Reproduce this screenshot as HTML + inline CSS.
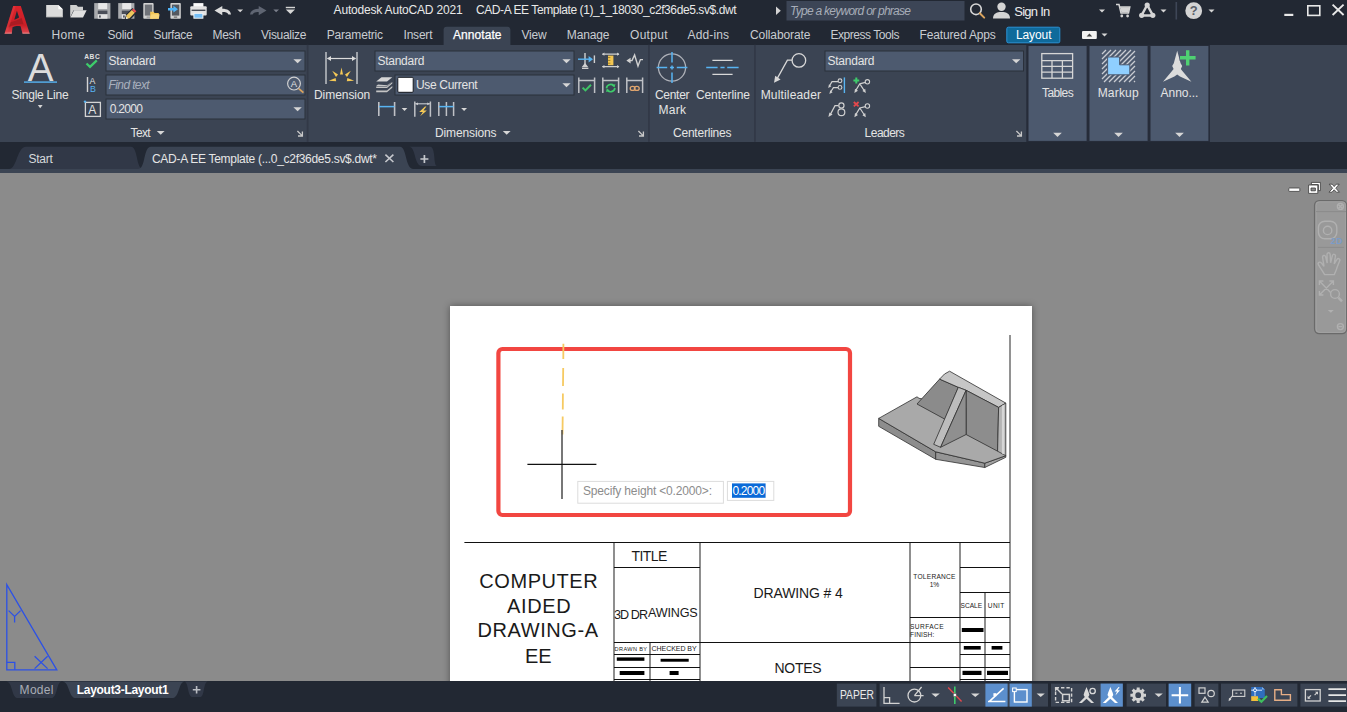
<!DOCTYPE html>
<html lang="en"><head><meta charset="utf-8"><title>Autodesk AutoCAD 2021 - CAD-A EE Template</title>
<style>
html,body{margin:0;padding:0;background:#8b8b8b;overflow:hidden}
body{width:1347px;height:712px;position:relative;font-family:"Liberation Sans", sans-serif}
#app{position:absolute;left:0;top:0;width:1347px;height:712px;overflow:hidden;background:#8b8b8b}
.bar{position:absolute;left:0;width:1347px}
#titlebar{top:0;height:45px;background:#222833}
#ribbon{top:45px;height:97px;background:#3b4453}
#filetabs{top:142px;height:31px;background:#222833}
#drawing{top:173px;height:509px;background:#8b8b8b;overflow:hidden}
#paper{position:absolute;left:450.4px;top:132.8px;width:581.3px;height:420px;background:#fff;box-shadow:0 0 7px 0 rgba(0,0,0,.4)}
#statusbar{top:681px;height:31px;background:#222833}
#gfx{position:absolute;left:0;top:0;width:1347px;height:712px}
#gfx text{font-family:"Liberation Sans", sans-serif;white-space:pre}
</style></head><body>
<div id="app">
<div class="bar" id="titlebar"></div>
<div class="bar" id="ribbon"></div>
<div class="bar" id="filetabs"></div>
<div class="bar" id="drawing"><div id="paper"></div></div>
<div class="bar" id="statusbar"></div>
<svg id="gfx" width="1347" height="712" viewBox="0 0 1347 712">
<defs><linearGradient id="lg" x1="0" y1="0" x2="0" y2="1"><stop offset="0" stop-color="#d9232b"/><stop offset=".7" stop-color="#c91f27"/><stop offset=".93" stop-color="#d94048"/><stop offset="1" stop-color="#f08a8a"/></linearGradient></defs><g><path d="M13.2 5.9H20.8L29.8 33.7H22.5L20.6 26.3C17.6 25.7 14.6 26.2 12.5 27.2L11.8 33.7H4.5Z" fill="url(#lg)"/><path d="M16.9 10.7L19.1 17.4C17.6 18.3 15.9 19.2 14.3 19.7Z" fill="#222833"/><path d="M10 22.6C14 21.4 18.4 19.6 21.6 18L23.6 24.4C19.4 23.6 12.6 24.8 8.2 27.4Z" fill="#ab1b22"/><path d="M13.2 5.9H15.6L7.2 33.7H4.5Z" fill="#ef4a4e" opacity=".35"/></g><path d="M46.2 5H58.4L62.8 9.2V17H46.2Z" fill="#dcdcdc"/><path d="M58.4 5V9.2H62.8Z" fill="#fff"/><path d="M46.2 16.4H62.8V17.4H46.2Z" fill="#b8b8b8"/><path d="M70.2 5H76.4L78 6.8H83V10.4H73.4L70.2 17.4Z" fill="#d0d0d0"/><path d="M74 10.2H86.6L83 17.6H70.4Z" fill="#e0e0e0"/><rect x="94.2" y="3.1" width="16.2" height="15.6" fill="#a9abae"/><rect x="98.2" y="3.1" width="9" height="5.9" fill="#e8e8e8"/><rect x="97.8" y="10.6" width="9.6" height="3.4" fill="#4a4e58"/><rect x="97.8" y="14.4" width="9.6" height="4.3" fill="#e2e2e2"/><rect x="99" y="15.4" width="1.8" height="2.2" fill="#5a5e68"/><rect x="118.2" y="3.1" width="16.2" height="15.6" fill="#a9abae"/><rect x="122.2" y="3.1" width="9" height="5.9" fill="#e8e8e8"/><rect x="121.8" y="10.6" width="9.6" height="3.4" fill="#4a4e58"/><rect x="121.8" y="14.4" width="9.6" height="4.3" fill="#e2e2e2"/><rect x="123" y="15.4" width="1.8" height="2.2" fill="#5a5e68"/><path d="M124.6 19.6L126.2 14.2L132.4 8L137 12.4L130.6 19.6Z" fill="#222833"/><path d="M126.6 15.2L131.8 10L134.8 12.8L129.6 18.2L125.8 19Z" fill="#ecc65c"/><path d="M131.8 10L133.4 8.4L136.4 11.2L134.8 12.8Z" fill="#ea4f52"/><path d="M125.8 19L126.4 16.6L128 18.4Z" fill="#e8e8e8"/><rect x="143.3" y="3.1" width="10.3" height="15.6" rx=".8" fill="#d2d2d2"/><rect x="144.8" y="4.6" width="7.4" height="11" fill="#707379"/><rect x="146.6" y="16.6" width="3.4" height="1" fill="#8a8a8a"/><path d="M150.2 11.8H153.6L154.6 13H158.8V18.7H150.2Z" fill="#f2c555"/><path d="M151.4 14.2H159.6L158.8 18.7H150.2Z" fill="#f7d57a"/><rect x="170.4" y="3.1" width="10.4" height="15.6" rx=".8" fill="#d2d2d2"/><rect x="171.9" y="4.6" width="7.4" height="11" fill="#54585f"/><rect x="173.8" y="16.6" width="3.4" height="1" fill="#555"/><path d="M168 7.9H173.4V5.8L178 9.2L173.4 12.6V10.5H168Z" fill="#4fb4f8"/><rect x="193.4" y="3.1" width="10" height="4" fill="#fafafa"/><rect x="190.3" y="6.3" width="16.4" height="9.3" rx="1" fill="#e2e2e2"/><rect x="191.6" y="9.6" width="13.8" height="1.4" fill="#4a4e58"/><rect x="193.9" y="13.3" width="9" height="4.9" fill="#76bff6" stroke="#f4f4f4" stroke-width="1"/><path d="M214.5 10.6L222.3 6V8.7C227.5 8.7 230.6 10.8 231 14.6H228.4C227.6 12.6 225.6 12 222.3 12V15.2Z" fill="#dcdcdc"/><path d="M237.3 9.5H243.1L240.2 12.2Z" fill="#d6d6d6"/><path d="M266.5 10.6L258.7 6V8.7C253.5 8.7 250.4 10.8 250 14.6H252.6C253.4 12.6 255.4 12 258.7 12V15.2Z" fill="#5f6572"/><path d="M273.3 9.5H279L276.15 12.2Z" fill="#7a7f8b"/><rect x="285.8" y="6.8" width="9.2" height="1.4" fill="#d4d4d4"/><path d="M285.8 9.6H295L290.4 14Z" fill="#d6d6d6"/><text x="333.6" y="14" font-size="12" fill="#e8e8e8" textLength="129" lengthAdjust="spacing" >Autodesk AutoCAD 2021</text><text x="476" y="14" font-size="12" fill="#e8e8e8" textLength="260.5" lengthAdjust="spacing" >CAD-A EE Template (1)_1_18030_c2f36de5.sv$.dwt</text><path d="M776 6.5L780.8 10.8L776 15Z" fill="#d4d4d4"/><rect x="786.5" y="1" width="178" height="19.5" fill="#3c4556"/><text x="790" y="15" font-size="12" fill="#a7adb8" textLength="121" lengthAdjust="spacing" font-style="italic" >Type a keyword or phrase</text><circle cx="976" cy="9.3" r="5.3" fill="none" stroke="#d8d8d8" stroke-width="1.6"/><path d="M979.8 13.2L984.2 17.6" stroke="#d9a35e" stroke-width="2" stroke-linecap="round"/><circle cx="1001.5" cy="6.8" r="4.2" fill="#d4d4d4"/><path d="M993 18.5C993 13.5 996.5 12 1001.5 12S1010 13.5 1010 18.5Z" fill="#d4d4d4"/><text x="1014.3" y="16" font-size="13" fill="#ececec" textLength="36" lengthAdjust="spacing" >Sign In</text><path d="M1099 9.5H1105L1102.0 12.5Z" fill="#d6d6d6"/><path d="M1116 4.5H1119L1121 13H1128.5L1129.8 7H1120" fill="none" stroke="#d4d4d4" stroke-width="1.5"/><path d="M1120.3 7.3H1129.6L1128.4 12.6H1121.4Z" fill="#d4d4d4"/><circle cx="1121.8" cy="16" r="1.4" fill="#d4d4d4"/><circle cx="1127.6" cy="16" r="1.4" fill="#d4d4d4"/><path d="M1147.2 5L1141.5 15.5H1153Z" fill="none" stroke="#d4d4d4" stroke-width="2.5" stroke-linejoin="round"/><circle cx="1147.2" cy="5" r="2.6" fill="#d4d4d4"/><circle cx="1141.7" cy="15.3" r="2.6" fill="#d4d4d4"/><circle cx="1152.8" cy="15.3" r="2.6" fill="#d4d4d4"/><path d="M1160.5 9.5H1166.5L1163.5 12.5Z" fill="#d6d6d6"/><rect x="1175.5" y="2" width="1.6" height="17.5" fill="#3e4657"/><circle cx="1193.7" cy="10.7" r="8.4" fill="#d4d4d4"/><text x="1193.7" y="15.4" font-size="13" fill="#5a5f69" font-weight="bold" text-anchor="middle" >?</text><path d="M1208.5 9.5H1214.5L1211.5 12.5Z" fill="#d6d6d6"/><rect x="1284.3" y="13.8" width="9" height="2.2" fill="#e8e8e8"/><rect x="1307.8" y="5.8" width="12" height="9.6" fill="none" stroke="#e8e8e8" stroke-width="1.6"/><path d="M1332.6 4.6L1343.6 15M1343.6 4.6L1332.6 15" stroke="#e8e8e8" stroke-width="1.9"/><path d="M443.6 45V29.7Q443.6 26.7 446.6 26.7H507.4Q510.4 26.7 510.4 29.7V45Z" fill="#3b4453"/><text x="51.6" y="39" font-size="12" fill="#c9ccd1" textLength="33" lengthAdjust="spacing" >Home</text><text x="107.5" y="39" font-size="12" fill="#c9ccd1" textLength="25.6" lengthAdjust="spacing" >Solid</text><text x="153.6" y="39" font-size="12" fill="#c9ccd1" textLength="39" lengthAdjust="spacing" >Surface</text><text x="212.5" y="39" font-size="12" fill="#c9ccd1" textLength="28.5" lengthAdjust="spacing" >Mesh</text><text x="261" y="39" font-size="12" fill="#c9ccd1" textLength="45.5" lengthAdjust="spacing" >Visualize</text><text x="326.7" y="39" font-size="12" fill="#c9ccd1" textLength="56.4" lengthAdjust="spacing" >Parametric</text><text x="403.5" y="39" font-size="12" fill="#c9ccd1" textLength="29" lengthAdjust="spacing" >Insert</text><text x="521.5" y="39" font-size="12" fill="#c9ccd1" textLength="25.2" lengthAdjust="spacing" >View</text><text x="566.8" y="39" font-size="12" fill="#c9ccd1" textLength="42.7" lengthAdjust="spacing" >Manage</text><text x="630" y="39" font-size="12" fill="#c9ccd1" textLength="37.5" lengthAdjust="spacing" >Output</text><text x="687.5" y="39" font-size="12" fill="#c9ccd1" textLength="41.5" lengthAdjust="spacing" >Add-ins</text><text x="750" y="39" font-size="12" fill="#c9ccd1" textLength="60.5" lengthAdjust="spacing" >Collaborate</text><text x="830.5" y="39" font-size="12" fill="#c9ccd1" textLength="69" lengthAdjust="spacing" >Express Tools</text><text x="919.6" y="39" font-size="12" fill="#c9ccd1" textLength="76.2" lengthAdjust="spacing" >Featured Apps</text><text x="453" y="39" font-size="12" fill="#ffffff" textLength="48.5" lengthAdjust="spacing" stroke="#ffffff" stroke-width=".25">Annotate</text><rect x="1006.8" y="27.2" width="53" height="15.6" rx="1.5" fill="#0f6a9b" stroke="#2b93d6" stroke-width="1"/><text x="1015.9" y="39" font-size="12" fill="#ffffff" textLength="35.6" lengthAdjust="spacing" >Layout</text><rect x="1082" y="31" width="14.8" height="8" rx="1" fill="#f2f2f2"/><path d="M1086.6 36.6L1089.4 33.4L1092.2 36.6Z" fill="#444"/><path d="M1101.5 33.5H1107.5L1104.5 36.5Z" fill="#d6d6d6"/><rect x="306.70000000000005" y="44.8" width="1.8" height="97" fill="#323947"/><rect x="648.0" y="44.8" width="1.8" height="97" fill="#323947"/><rect x="754.0" y="44.8" width="1.8" height="97" fill="#323947"/><rect x="1026.3" y="44.8" width="183.6" height="97.2" fill="#262c39"/><rect x="1028.5" y="46" width="58.09999999999991" height="94.9" fill="#4c596e"/><rect x="1089.5" y="46" width="58.09999999999991" height="94.9" fill="#4c596e"/><rect x="1150.5" y="46" width="57.90000000000009" height="94.9" fill="#4c596e"/><text x="40.5" y="80.6" font-size="38.6" fill="#dcdcdc" text-anchor="middle" >A</text><rect x="24" y="81.4" width="33" height="1.4" fill="#56b2f0"/><text x="11.6" y="98.8" font-size="12" fill="#e4e4e4" textLength="57" lengthAdjust="spacing" >Single Line</text><path d="M37.8 105H42.6L40.2 108.2Z" fill="#d6d6d6"/><text x="84.2" y="59.4" font-size="6.6" fill="#e0e0e0" textLength="15.6" lengthAdjust="spacing" font-weight="bold" >ABC</text><path d="M86.5 63.5L90 66.8L96.8 60.4" fill="none" stroke="#3ecb6b" stroke-width="2.3"/><rect x="86.8" y="77" width="1.4" height="15" fill="#d4d4d4"/><text x="89.6" y="84" font-size="8.8" fill="#e0e0e0" >A</text><text x="90" y="92" font-size="8.8" fill="#58b4f2" >B</text><rect x="85.4" y="102.4" width="15" height="14" fill="none" stroke="#d4d4d4" stroke-width="1.3"/><circle cx="85" cy="101.6" r="1.2" fill="#58b4f2"/><text x="88.3" y="114.2" font-size="12" fill="#e0e0e0" >A</text><rect x="106.0" y="51.0" width="199.0" height="20" fill="#4d5a6f" stroke="#2a303b" stroke-width="1"/><rect x="106.0" y="75.0" width="199.0" height="20" fill="#4d5a6f" stroke="#2a303b" stroke-width="1"/><rect x="106.0" y="99.0" width="199.0" height="20" fill="#4d5a6f" stroke="#2a303b" stroke-width="1"/><text x="108.6" y="64.8" font-size="12" fill="#e4e4e4" textLength="47" lengthAdjust="spacing" >Standard</text><text x="108.6" y="88.7" font-size="12" fill="#a9b0bd" textLength="41" lengthAdjust="spacing" font-style="italic" >Find text</text><text x="109.7" y="112.7" font-size="12" fill="#e4e4e4" textLength="33.2" lengthAdjust="spacing" >0.2000</text><path d="M293.4 59.3H301.8L297.6 63.2Z" fill="#d6d6d6"/><path d="M293.4 107.3H301.8L297.6 111.2Z" fill="#d6d6d6"/><circle cx="294" cy="83.6" r="6.4" fill="none" stroke="#d0d0d0" stroke-width="1.2"/><path d="M298.8 88.6L303.4 92.6" stroke="#d9a35e" stroke-width="1.8"/><text x="294" y="87.2" font-size="9.5" fill="#e0e0e0" text-anchor="middle" >A</text><text x="130.5" y="136.6" font-size="12" fill="#e4e4e4" textLength="20.2" lengthAdjust="spacing" >Text</text><path d="M156.8 131H164.6L160.7 134.8Z" fill="#d6d6d6"/><path d="M297.4 131L301.79999999999995 135.4M302.4 131.6V136H298.0" fill="none" stroke="#c9c9c9" stroke-width="1.3"/><path d="M326 52V84M357 52V84" stroke="#bfc1c6" stroke-width="1.5"/><path d="M327.5 58.5H355.5" stroke="#dcdcdc" stroke-width="1.2"/><path d="M327 58.5L331 56V61ZM356 58.5L352 56V61Z" fill="#dcdcdc"/><g fill="#f5c956"><path d="M341.5 67.4L343 74.6H340Z"/><path d="M332.2 70.8L338 74.6L336 76.9Z"/><path d="M350.8 70.8L345 74.6L347 76.9Z"/><path d="M328.8 80.8L335.6 77.9L336.2 81.3Z"/><path d="M354.2 80.8L347.4 77.9L346.8 81.3Z"/></g><text x="314" y="98.8" font-size="12" fill="#e4e4e4" textLength="56.3" lengthAdjust="spacing" >Dimension</text><rect x="375.0" y="51.0" width="199.0" height="20" fill="#4d5a6f" stroke="#2a303b" stroke-width="1"/><rect x="395.0" y="75.0" width="179.0" height="20" fill="#4d5a6f" stroke="#2a303b" stroke-width="1"/><text x="377.4" y="64.8" font-size="12" fill="#e4e4e4" textLength="47" lengthAdjust="spacing" >Standard</text><rect x="397.8" y="77.3" width="15.4" height="15" rx="1" fill="#fff" stroke="#15181e" stroke-width="1"/><text x="415.9" y="88.7" font-size="12" fill="#e4e4e4" textLength="61.7" lengthAdjust="spacing" >Use Current</text><path d="M562.4 59.3H570.6L566.5 63.2Z" fill="#d6d6d6"/><path d="M562.4 83.3H570.6L566.5 87.2Z" fill="#d6d6d6"/><g fill="#d6d6d6"><path d="M381.5 77.2H392.3L387 81.6H376.2Z"/><path d="M378 84.4L376.2 85.9H387L392.3 81.5L391 82.6L387 85.2Z" opacity=".9"/><path d="M376.2 86.4H387L392.3 82V83.6L387 88H376.2Z" fill="#c4c4c4"/><path d="M376.2 90.4H387L392.3 86V87.8L387 92.2H376.2Z" fill="#c4c4c4"/></g><path d="M378.8 102V116M394.6 102V116" stroke="#bfc1c6" stroke-width="1.6"/><path d="M379 106.6H394.4" stroke="#58b4f2" stroke-width="1.5"/><path d="M401.7 108H407.3L404.5 111Z" fill="#d6d6d6"/><path d="M414.8 101.4V116.8M430.4 101.4V116.8" stroke="#bfc1c6" stroke-width="1.5" fill="none"/><path d="M415.4 103.8H429.8" stroke="#c9cbd0" stroke-width="1.1"/><path d="M415.2 103.8L418 102.4V105.2ZM430 103.8L427.2 102.4V105.2Z" fill="#c9cbd0"/><path d="M425 106.6L419.2 112H422.8L420.2 116.2L426.8 110.6H423.4L426.4 106.6Z" fill="#f5c956"/><path d="M438.8 102V116M446.4 102V116M453.6 102V116" stroke="#bfc1c6" stroke-width="1.5"/><path d="M439 106.6H453.4" stroke="#58b4f2" stroke-width="1.5"/><path d="M461.2 108H467L464.1 111Z" fill="#d6d6d6"/><text x="434.9" y="136.6" font-size="12" fill="#e4e4e4" textLength="61.7" lengthAdjust="spacing" >Dimensions</text><path d="M502.8 131H510.6L506.70000000000005 134.8Z" fill="#d6d6d6"/><path d="M638.4 131L642.8 135.4M643.4 131.6V136H639.0" fill="none" stroke="#c9c9c9" stroke-width="1.3"/><path d="M585 53V67M582 68.4H588.4" stroke="#d0d0d0" stroke-width="1.4"/><path d="M581.6 67.2L585 63L588.4 67.2Z" fill="#d0d0d0"/><path d="M578 59.2H590" stroke="#58b4f2" stroke-width="1.4"/><path d="M593 59.2L588.6 56V62.4Z" fill="#58b4f2"/><path d="M594.4 55.4V63" stroke="#d0d0d0" stroke-width="1.4"/><path d="M602.4 54.2H619M602.4 66.6H619" stroke="#d0d0d0" stroke-width="1.3"/><path d="M602 54.2L604.4 52.6V55.8ZM619.4 54.2L617 52.6V55.8ZM602 66.6L604.4 65V68.2ZM619.4 66.6L617 65V68.2Z" fill="#d0d0d0"/><rect x="608" y="55.6" width="5.4" height="9.6" fill="#f3c651"/><path d="M608 57.6H610.4M608 60.4H610.4M608 63.2H610.4" stroke="#8a6d1e" stroke-width=".8"/><path d="M627.4 60.6H632L634.6 55L638 66L640.4 59.6H643" fill="none" stroke="#d0d0d0" stroke-width="1.4"/><path d="M626.4 60.6L630.6 57.8V63.4Z" fill="#d0d0d0"/><path d="M578.8 77.4V93M594.5999999999999 77.4V93M578.8 80.6H594.5999999999999" stroke="#bfc1c6" stroke-width="1.5" fill="none"/><path d="M602.8 77.4V93M618.5999999999999 77.4V93M602.8 80.6H618.5999999999999" stroke="#bfc1c6" stroke-width="1.5" fill="none"/><path d="M626.8 77.4V93M642.5999999999999 77.4V93M626.8 80.6H642.5999999999999" stroke="#bfc1c6" stroke-width="1.5" fill="none"/><path d="M582.6 87.6L585.4 90.4L591 84.8" fill="none" stroke="#3fc466" stroke-width="2"/><path d="M606.6 88.2A4.2 3.6 0 0 1 613.8 85.6M614.8 88A4.2 3.6 0 0 1 607.6 90.6" fill="none" stroke="#3ecb6b" stroke-width="1.7"/><path d="M615.4 84L614.6 87.6L611.6 85.6ZM606 92L606.8 88.4L609.8 90.4Z" fill="#3ecb6b"/><ellipse cx="632.6" cy="88.4" rx="2.4" ry="2" fill="none" stroke="#e0a56e" stroke-width="1.3"/><ellipse cx="636.8" cy="88.4" rx="2.4" ry="2" fill="none" stroke="#e0a56e" stroke-width="1.3"/><circle cx="672" cy="67.5" r="13.6" fill="none" stroke="#aeb1b8" stroke-width="1.3"/><path d="M672 52V62.6M672 72.4V83M656.6 67.5H667.2M676.8 67.5H687.4M670 67.5H674M672 65.5V69.5" stroke="#58b4f2" stroke-width="1.5"/><text x="655" y="98.8" font-size="12" fill="#e4e4e4" textLength="34.5" lengthAdjust="spacing" >Center</text><text x="658.6" y="113.5" font-size="12" fill="#e4e4e4" textLength="27.4" lengthAdjust="spacing" >Mark</text><path d="M712.4 60.4H732.6M712.4 74.4H732.6" stroke="#d8d8d8" stroke-width="1.2"/><path d="M706.2 67.5H717.6M720.4 67.5H724.6M727.2 67.5H738.6" stroke="#58b4f2" stroke-width="1.5"/><text x="695.9" y="98.8" font-size="12" fill="#e4e4e4" textLength="54.1" lengthAdjust="spacing" >Centerline</text><text x="673" y="136.6" font-size="12" fill="#e4e4e4" textLength="58.5" lengthAdjust="spacing" >Centerlines</text><circle cx="798.9" cy="60.4" r="6.8" fill="none" stroke="#d8d8d8" stroke-width="1.3"/><path d="M792 60.2H787.4L776.6 79.6" fill="none" stroke="#d8d8d8" stroke-width="1.3"/><path d="M774 82.8L775.2 75.8L780.6 79.6Z" fill="#d8d8d8"/><text x="760.7" y="98.8" font-size="12" fill="#e4e4e4" textLength="60.3" lengthAdjust="spacing" >Multileader</text><rect x="825.0" y="51.0" width="198.5" height="20" fill="#4d5a6f" stroke="#2a303b" stroke-width="1"/><text x="827.5" y="64.8" font-size="12" fill="#e4e4e4" textLength="47" lengthAdjust="spacing" >Standard</text><path d="M1012 59.3H1020.4L1016.2 63.2Z" fill="#d6d6d6"/><path d="M829.4 86L832 81.6H838M830.6 92L833.4 87.6H838" fill="none" stroke="#d0d0d0" stroke-width="1.2"/><circle cx="840" cy="80.8" r="1.9" fill="none" stroke="#d0d0d0" stroke-width="1.1"/><circle cx="840" cy="87.4" r="1.9" fill="none" stroke="#d0d0d0" stroke-width="1.1"/><path d="M828.2 88L829 84.2L831.4 86.2ZM829.4 94L830.2 90.2L832.6 92.2Z" fill="#d0d0d0"/><path d="M844.4 77.4V93" stroke="#58b4f2" stroke-width="1.4"/><path d="M855.8 90.4L859.8 83.80000000000001L865.4 82.4M859.8 83.80000000000001L864.4 90.80000000000001" fill="none" stroke="#d0d0d0" stroke-width="1.2"/><circle cx="867.4" cy="81.80000000000001" r="2.2" fill="none" stroke="#d0d0d0" stroke-width="1.1"/><path d="M854.4 93.0L855.0 88.80000000000001L858.0 90.80000000000001ZM865.8 93.0L862.4 91.0L865.1999999999999 88.80000000000001Z" fill="#d0d0d0"/><path d="M853.4 80.4H859.2M856.3 77.4V83.4" stroke="#3ecb6b" stroke-width="2"/><path d="M830.4 114.4L835 105.6H838.4" fill="none" stroke="#d0d0d0" stroke-width="1.2"/><path d="M828.4 117L829.4 112.4L832.6 114.6Z" fill="#d0d0d0"/><circle cx="841.4" cy="105.4" r="2.6" fill="none" stroke="#d0d0d0" stroke-width="1.2"/><circle cx="841.4" cy="112.2" r="3.4" fill="none" stroke="#d0d0d0" stroke-width="1.2"/><path d="M855.8 114.6L859.8 108.0L865.4 106.6M859.8 108.0L864.4 115.0" fill="none" stroke="#d0d0d0" stroke-width="1.2"/><circle cx="867.4" cy="106.0" r="2.2" fill="none" stroke="#d0d0d0" stroke-width="1.1"/><path d="M854.4 117.19999999999999L855.0 113.0L858.0 115.0ZM865.8 117.19999999999999L862.4 115.19999999999999L865.1999999999999 113.0Z" fill="#d0d0d0"/><path d="M853.8 102L858.6 106.4M858.6 102L853.8 106.4" stroke="#e4484c" stroke-width="1.8"/><text x="864.6" y="136.6" font-size="12" fill="#e4e4e4" textLength="40.2" lengthAdjust="spacing" >Leaders</text><path d="M1016.4 131L1020.8 135.4M1021.4 131.6V136H1017.0" fill="none" stroke="#c9c9c9" stroke-width="1.3"/><g fill="none" stroke="#d6d6d6" stroke-width="1.3"><rect x="1041.8" y="53.6" width="30.8" height="24.6"/><path d="M1041.8 60.6H1072.6M1041.8 66.4H1072.6M1041.8 72.2H1072.6M1052 60.6V78.2M1062.4 60.6V78.2"/></g><text x="1042" y="96.5" font-size="12" fill="#e4e4e4" textLength="31.7" lengthAdjust="spacing" >Tables</text><path d="M1053.2 132.8H1061.8L1057.5 137Z" fill="#d6d6d6"/><path d="M1102 54L1106 50M1102 59L1111 50M1102 64L1116 50M1102 69L1121 50M1102 74L1126 50M1102 79L1131 50M1104 82L1135 51M1109 82L1135 56M1114 82L1135 61M1119 82L1135 66M1124 82L1135 71M1129 82L1135 76M1134 82L1135 81" stroke="#c9ccd2" stroke-width="1.3"/><path d="M1107.6 57H1119.6V64.8H1129.8V74.8H1107.6Z" fill="#8fcfff" stroke="#4c596e" stroke-width="1"/><text x="1097.7" y="96.5" font-size="12" fill="#e4e4e4" textLength="40.9" lengthAdjust="spacing" >Markup</text><path d="M1114.2 132.8H1122.8L1118.5 137Z" fill="#d6d6d6"/><path d="M1177.2 50.8L1180.6 63.2L1182.2 66L1180.8 69L1182.4 71L1191.4 81.8L1180 76.4L1177.2 74.6L1174.4 76.4L1163 81.8L1172 71L1173.6 69L1172.2 66L1173.8 63.2Z" fill="#dcdcdc"/><path d="M1179.6 57.8H1195.8M1187.7 50V65.6" stroke="#4c596e" stroke-width="6"/><path d="M1180 57.8H1195.6M1187.7 50.2V65.4" stroke="#4fd172" stroke-width="3.4"/><text x="1160.5" y="96.5" font-size="12" fill="#e4e4e4" textLength="37.9" lengthAdjust="spacing" >Anno...</text><path d="M1175.2 132.8H1183.8L1179.5 137Z" fill="#d6d6d6"/><rect x="0" y="169" width="1347" height="4" fill="#3b4453"/><path d="M9 169C17 169 17 146.8 26 146.8H131C138 146.8 136 169 143 169Z" fill="#313847"/><path d="M138 169C146 169 143 146.8 151 146.8H400C407 146.8 405 169 413.5 169Z" fill="#3b4453"/><path d="M409 146.8H430C436 146.8 433 166 437 166H422C414 166 416 146.8 409 146.8Z" fill="#313847"/><text x="28.6" y="163" font-size="12" fill="#d6d8dc" textLength="24.2" lengthAdjust="spacing" >Start</text><text x="152" y="163" font-size="12" fill="#e6e6e6" textLength="225" lengthAdjust="spacing" >CAD-A EE Template (...0_c2f36de5.sv$.dwt*</text><path d="M385.4 154.6L393.4 162M393.4 154.6L385.4 162" stroke="#c6c8cd" stroke-width="1.6"/><path d="M420.4 159H428.4M424.4 155V163" stroke="#c6c8cd" stroke-width="1.7"/><g stroke="#3a3a3a" stroke-width=".8" fill="#fff"><rect x="1288.8" y="188" width="11" height="3.4" rx=".6"/><path d="M1311.4 182.4H1320.4V190.6H1318.4V184.6H1311.4Z"/><path d="M1308.6 185H1317.8V193.4H1308.6ZM1311 188V190.8H1315.4V188Z" fill-rule="evenodd"/><path d="M1329.2 184.2H1332.2L1334.2 186.6L1336.2 184.2H1339.2L1335.8 188.2L1339.4 192.2H1336.4L1334.2 189.8L1332 192.2H1329L1332.6 188.2Z"/></g><rect x="1314.6" y="200.6" width="32" height="133" rx="4.5" fill="#999999" stroke="#6a6a6a" stroke-width="1.3"/><rect x="1316" y="201.8" width="29.6" height="130.6" rx="3.6" fill="none" stroke="#a4a4a4" stroke-width=".8"/><g fill="none" stroke="#b0b0b0" stroke-width="1.4"><circle cx="1340.4" cy="206.4" r="3"/><path d="M1338.4 204.4L1342.4 208.4M1342.4 204.4L1338.4 208.4"/><path d="M1316 211.6H1346M1318 247.4H1344" stroke="#8c8c8c" stroke-width="1"/><rect x="1318.4" y="221.2" width="18.4" height="17.6" rx="6.5"/><circle cx="1327.6" cy="230.4" r="4.2"/><path d="M1324.6 274.6C1322 270.4 1320 267.6 1318.4 264.6C1317.4 262.6 1319.8 261.2 1321.4 263L1324 266.4L1322.6 257.4C1322.2 255.2 1325 254.6 1325.6 256.8L1327.2 263L1327 254.6C1327 252.2 1330 252.2 1330.2 254.6L1330.6 262.8L1332.4 255.6C1333 253.4 1335.8 254.2 1335.4 256.4L1334.2 263.8L1337 259.4C1338.2 257.6 1340.6 259 1339.6 261L1337.4 266.4C1336.4 270.4 1335.2 272.6 1334.2 274.6Z"/><path d="M1319.4 281L1333 295M1333.4 281L1319.4 295M1319.4 285V281H1323.4M1329.4 281H1333.4V285M1319.4 291V295H1323.4"/><circle cx="1335" cy="294" r="4.4" fill="#999"/><path d="M1338.4 297.6L1342 301.4" stroke-width="2.4"/><circle cx="1340.4" cy="326.6" r="3"/><path d="M1338.4 326.6H1342.4"/></g><text x="1330.4" y="243.8" font-size="8.8" fill="#7b9cc8" textLength="12" lengthAdjust="spacing" font-weight="bold" >2D</text><path d="M1327.8 310H1333.8L1330.8 312.8Z" fill="#b0b0b0"/><rect x="498.4" y="349" width="351.6" height="166" rx="4" fill="none" stroke="#f24641" stroke-width="4.2"/><path d="M563.4 343.8L563.3 359M563.2 368L563 386M562.9 393.4L562.8 409.6M562.7 416.4L562.5 434.6" stroke="#f6ca62" stroke-width="1.8"/><path d="M562 430V499" stroke="#4a4a4a" stroke-width="1.5"/><path d="M527.4 464.4H596.4" stroke="#111" stroke-width="1.3"/><rect x="577.8" y="481.4" width="145.6" height="21.8" fill="#fff" stroke="#dcdcdc" stroke-width="1"/><text x="583" y="495" font-size="12" fill="#8c8c8c" textLength="129" lengthAdjust="spacing" >Specify height &lt;0.2000&gt;:</text><rect x="727.4" y="481.4" width="46.4" height="19" fill="#fff" stroke="#dcdcdc" stroke-width="1"/><rect x="732" y="483.4" width="33.6" height="14.4" fill="#0a6ad8"/><text x="732.4" y="494.8" font-size="12" fill="#ffffff" textLength="32.8" lengthAdjust="spacing" >0.2000</text><path d="M1010 335V682" stroke="#6e6e6e" stroke-width="1.5"/><path d="M878.7 418.4L935.7 451.8L935.7 459.3L878.7 426.3Z" fill="#8d8d8d" stroke="#2e2e2e" stroke-width="0.8" stroke-linejoin="round"/><path d="M935.7 451.8L984.8 463.2L984.8 467.5L935.7 459.3Z" fill="#959595" stroke="#2e2e2e" stroke-width="0.8" stroke-linejoin="round"/><path d="M984.8 463.2L1005.8 455.7L1005.8 457.3L984.8 467.5Z" fill="#a2a2a2" stroke="#2e2e2e" stroke-width="0.8" stroke-linejoin="round"/><path d="M878.7 418.4L917.0 396.8L919.0 398.3L970.1 409.0L1005.8 455.7L984.8 463.2L935.7 451.8Z" fill="#a9a9a9" stroke="#2e2e2e" stroke-width="0.8" stroke-linejoin="round"/><path d="M917.0 404.0L939.6 379.1L958.3 387.3L944.9 419.2Z" fill="#8b8b8b" stroke="#2e2e2e" stroke-width="0.8" stroke-linejoin="round"/><path d="M939.6 379.1L944.5 374.0L949.6 371.2L1005.8 403.1L998.6 407.4L966.1 390.3L958.3 387.3Z" fill="#c6c6c6" stroke="#2e2e2e" stroke-width="0.8" stroke-linejoin="round"/><path d="M966.1 390.3L998.6 407.4L997.6 451.2L966.1 434.5Z" fill="#8d8d8d" stroke="#2e2e2e" stroke-width="0.8" stroke-linejoin="round"/><path d="M998.6 407.4L1005.8 403.1L1005.8 455.7L997.6 451.2Z" fill="#b4b4b4" stroke="#2e2e2e" stroke-width="0.8" stroke-linejoin="round"/><path d="M1001.9 405.8L1004.3 404.4L1004.3 454.6L1001.9 453.4Z" fill="#d6d6d6" stroke="none" stroke-width="0.8" stroke-linejoin="round"/><path d="M958.3 387.3L966.1 390.3L940.6 447.3L933.7 444.3Z" fill="#bcbcbc" stroke="#2e2e2e" stroke-width="0.8" stroke-linejoin="round"/><path d="M966.1 390.3L966.1 434.5L940.6 447.3Z" fill="#8f8f8f" stroke="#2e2e2e" stroke-width="0.8" stroke-linejoin="round"/><path d="M614 542.3V690M700 542.3V690M910 542.3V690M960 542.3V690M985 592.6V690M650 642.4V690" stroke="#333" stroke-width="1.1" fill="none"/><path d="M464.4 542.5H1010M614 567.5H700M960 567.5H1010M960 592.5H1010M910 617.5H1010M614 642.5H1010M614 654.5H700M614 667.5H700M614 679.5H700M960 654.5H1010M910 667.5H1010M960 679.5H1010" stroke="#111" stroke-width="1" fill="none"/><text x="479.3" y="587.8" font-size="20" fill="#1a1a1a" textLength="118.4" lengthAdjust="spacing" >COMPUTER</text><text x="507" y="612.6" font-size="20" fill="#1a1a1a" textLength="63.7" lengthAdjust="spacing" >AIDED</text><text x="477.5" y="637.4" font-size="20" fill="#1a1a1a" textLength="120.5" lengthAdjust="spacing" >DRAWING-A</text><text x="525" y="662.6" font-size="20" fill="#1a1a1a" textLength="26.6" lengthAdjust="spacing" >EE</text><text x="631.4" y="560.8" font-size="14" fill="#1a1a1a" textLength="36" lengthAdjust="spacing" >TITLE</text><text x="614" y="618.8" font-size="12.6" fill="#1a1a1a" textLength="34" lengthAdjust="spacing" >3D DR</text><text x="648" y="617.4" font-size="12.6" fill="#1a1a1a" textLength="49.7" lengthAdjust="spacing" >AWINGS</text><text x="614.6" y="651.2" font-size="5.6" fill="#1a1a1a" textLength="32.4" lengthAdjust="spacing" >DRAWN BY</text><text x="651.6" y="651.2" font-size="7" fill="#1a1a1a" textLength="45" lengthAdjust="spacing" >CHECKED BY</text><text x="753.6" y="598" font-size="14" fill="#1a1a1a" textLength="89.1" lengthAdjust="spacing" >DRAWING # 4</text><text x="774.5" y="673" font-size="14" fill="#1a1a1a" textLength="47.2" lengthAdjust="spacing" >NOTES</text><text x="913.3" y="578.8" font-size="6.6" fill="#1a1a1a" textLength="42.2" lengthAdjust="spacing" >TOLERANCE</text><text x="929.8" y="586.8" font-size="6.6" fill="#1a1a1a" textLength="9.4" lengthAdjust="spacing" >1%</text><text x="960.5" y="608.2" font-size="6.6" fill="#1a1a1a" textLength="21.7" lengthAdjust="spacing" >SCALE</text><text x="987.8" y="608.2" font-size="6.6" fill="#1a1a1a" textLength="16.4" lengthAdjust="spacing" >UNIT</text><text x="910" y="629.2" font-size="6.6" fill="#1a1a1a" textLength="33.6" lengthAdjust="spacing" >SURFACE</text><text x="910" y="636.8" font-size="6.6" fill="#1a1a1a" textLength="24.3" lengthAdjust="spacing" >FINISH:</text><rect x="616.8" y="657.4" width="27.6" height="3.4" fill="#000"/><rect x="660.6" y="658.8" width="28.1" height="2.9" fill="#000"/><rect x="619.7" y="671" width="24.7" height="4.0" fill="#000"/><rect x="669.6" y="671" width="9.0" height="4.0" fill="#000"/><rect x="961.8" y="628" width="21.7" height="4.0" fill="#000"/><rect x="963.8" y="646" width="16.9" height="3.6" fill="#000"/><rect x="991.6" y="646" width="10.8" height="3.6" fill="#000"/><rect x="962.5" y="670.8" width="19.0" height="4.2" fill="#000"/><rect x="987" y="670.8" width="21.0" height="4.2" fill="#000"/><g fill="none" stroke="#2c51e6" stroke-width="1.3"><path d="M6.8 584.6V669.8H56.8Z"/><path d="M6.8 662.4H14.8V669.8"/><path d="M8.6 610.6L14.6 616.4L20.6 610.6M14.6 616.4V622.4"/><path d="M34.6 656.2L47.6 668.6M47.6 656.2L34.6 668.6"/></g><rect x="0" y="681.4" width="1347" height="31" fill="#222833"/><path d="M6 681.4H62C56 681.4 58 698 51 698H18C11 698 13 681.4 6 681.4Z" fill="#313847"/><path d="M62 681.4H185C178 681.4 180 698 172 698H76C68 698 70 681.4 62 681.4Z" fill="#3b4453"/><path d="M184 681.4H208C203 681.4 205 697 200 697H193C187 697 189 681.4 184 681.4Z" fill="#313847"/><text x="19.6" y="693.6" font-size="12" fill="#a9adb5" textLength="33.9" lengthAdjust="spacing" >Model</text><text x="76.8" y="693.6" font-size="12" fill="#ffffff" textLength="91.8" lengthAdjust="spacing" font-weight="bold" >Layout3-Layout1</text><path d="M192.8 689.8H200.4M196.6 686V693.6" stroke="#b9bcc2" stroke-width="1.6"/><rect x="836.8" y="683.6" width="39.6" height="23" fill="#3b4453"/><rect x="879.6" y="683.6" width="168.4" height="23" fill="#3b4453"/><rect x="985.4" y="683.6" width="22.2" height="23" fill="#5c8fcd"/><rect x="1009.6" y="683.6" width="22.2" height="23" fill="#5c8fcd"/><rect x="1051" y="683.6" width="71.8" height="23" fill="#3b4453"/><rect x="1100.6" y="683.6" width="22.2" height="23" fill="#5c8fcd"/><rect x="1126.6" y="683.6" width="39.4" height="23" fill="#3b4453"/><rect x="1168.6" y="683.6" width="22.6" height="23" fill="#5c8fcd"/><rect x="1194.6" y="683.6" width="23.8" height="23" fill="#3b4453"/><rect x="1221" y="683.6" width="76.4" height="23" fill="#3b4453"/><rect x="1300.4" y="683.6" width="46.6" height="23" fill="#3b4453"/><text x="840" y="699.2" font-size="12" fill="#eaeaea" textLength="34" lengthAdjust="spacingAndGlyphs" >PAPER</text><path d="M884 687V703.4H899.6M884 697.6H889.6V703.4" fill="none" stroke="#d2d2d2" stroke-width="1.3"/><circle cx="914.4" cy="695.6" r="6.4" fill="none" stroke="#d2d2d2" stroke-width="1.3"/><path d="M914.4 695.6H923.6M914.4 695.6L921.6 687" stroke="#d2d2d2" stroke-width="1.3"/><path d="M931.4 693.4H939.8L935.5999999999999 697Z" fill="#d6d6d6"/><path d="M954.8 686.6V704" stroke="#3ecb6b" stroke-width="1.6"/><path d="M948.2 687.6L961.6 701.4" stroke="#e4484c" stroke-width="1.4"/><rect x="953.4" y="693.6" width="2.8" height="2.8" fill="#fff" stroke="#555" stroke-width=".5"/><path d="M971 693.4H979.6L975.3 697Z" fill="#d6d6d6"/><path d="M988 701.6H1005.4M989.4 701.4L1003.6 688.4" stroke="#fff" stroke-width="1.5"/><rect x="993.4" y="693.2" width="3" height="3" fill="#fff"/><rect x="1014.4" y="689.6" width="12.6" height="12.4" fill="none" stroke="#fff" stroke-width="1.4"/><rect x="1012.6" y="688" width="3.6" height="3.6" fill="#5c8fcd" stroke="#fff" stroke-width="1"/><path d="M1036.6 693.4H1044.8L1040.6999999999998 697Z" fill="#d6d6d6"/><rect x="1055.6" y="687.8" width="16" height="14.6" fill="none" stroke="#d2d2d2" stroke-width="1.4" stroke-dasharray="3.4 2"/><rect x="1062.6" y="694.4" width="6.8" height="6.4" fill="none" stroke="#d2d2d2" stroke-width="1.5"/><path d="M1056.6 688.6L1062 694" stroke="#d2d2d2" stroke-width="1.4"/><path d="M1055 687.2H1059.4L1055 691.6Z" fill="#d2d2d2"/><path d="M1086.5 687L1088.7 692.4L1089.4 695L1088.2 697L1094.1 703H1091.1L1086.5 698.8L1081.9 703H1078.9L1084.8 697L1083.6 695L1084.3 692.4Z" fill="#dadada"/><circle cx="1092.6" cy="691" r="2.7" fill="none" stroke="#dadada" stroke-width="1.3"/><path d="M1110.4 687L1112.6000000000001 692.4L1113.3000000000002 695L1112.1000000000001 697L1118.0 703H1115.0L1110.4 698.8L1105.8000000000002 703H1102.8000000000002L1108.7 697L1107.5 695L1108.2 692.4Z" fill="#fff"/><path d="M1118.6 687L1114.6 691.4H1117L1115.4 695.4L1120 690.2H1117.6L1119.6 687Z" fill="#fff"/><path d="M1142.40 695.20L1146.00 695.20M1141.17 698.17L1143.72 700.72M1138.20 699.40L1138.20 703.00M1135.23 698.17L1132.68 700.72M1134.00 695.20L1130.40 695.20M1135.23 692.23L1132.68 689.68M1138.20 691.00L1138.20 687.40M1141.17 692.23L1143.72 689.68" stroke="#d2d2d2" stroke-width="3"/><circle cx="1138.2" cy="695.2" r="4.4" fill="none" stroke="#d2d2d2" stroke-width="3"/><path d="M1154.6 693.4H1162.8L1158.6999999999998 697Z" fill="#d6d6d6"/><path d="M1171.6 695.2H1188.2M1179.9 687V703.4" stroke="#fff" stroke-width="2"/><rect x="1199" y="687.9" width="6" height="5.4" fill="none" stroke="#d2d2d2" stroke-width="1.2"/><circle cx="1211.1" cy="693.5" r="3.2" fill="none" stroke="#d2d2d2" stroke-width="1.2"/><path d="M1205 697.2L1208.2 702.2H1201.8Z" fill="none" stroke="#d2d2d2" stroke-width="1.2"/><rect x="1232.6" y="690" width="12.2" height="6.4" fill="none" stroke="#d2d2d2" stroke-width="1.1"/><path d="M1235.4 693.2H1237.4M1240 693.2H1242" stroke="#d2d2d2" stroke-width="1"/><path d="M1232.6 695.6L1229.6 699.4" stroke="#d2d2d2" stroke-width="1.1"/><path d="M1228.6 701.2L1229 697.8L1231.4 699.6Z" fill="#d2d2d2"/><path d="M1251.2 687H1262L1264.8 689.4V698H1251.2Z" fill="#2f6dbd"/><path d="M1262 687L1264.8 689.4H1262Z" fill="#7fb0ea"/><rect x="1251.2" y="696.2" width="6.8" height="4.8" fill="#f2bf3a"/><path d="M1255 687V696M1251.2 690.2H1262" stroke="#d4e4fb" stroke-width="1"/><circle cx="1255" cy="690.2" r="1.5" fill="#2f6dbd" stroke="#fff" stroke-width=".9"/><path d="M1258 698.6L1261.4 701.8L1267 696" fill="none" stroke="#3fbf5f" stroke-width="2.2"/><path d="M1274.8 689.7H1281.4V694.6H1290.4V700.2H1274.8Z" fill="none" stroke="#e6ae86" stroke-width="1.4"/><rect x="1305.4" y="689.6" width="14.8" height="11.4" fill="none" stroke="#d2d2d2" stroke-width="1.3"/><path d="M1308 698.4L1311 695.4M1317.6 692.2L1314.6 695.2" stroke="#d2d2d2" stroke-width="1.2"/><path d="M1307.6 695.8V698.8H1310.6ZM1318 694.8V691.8H1315Z" fill="#d2d2d2"/><path d="M1328.4 689.2H1346M1328.4 695.2H1346M1328.4 701.2H1346" stroke="#e6e6e6" stroke-width="1.7"/>
</svg>
</div>
</body></html>
